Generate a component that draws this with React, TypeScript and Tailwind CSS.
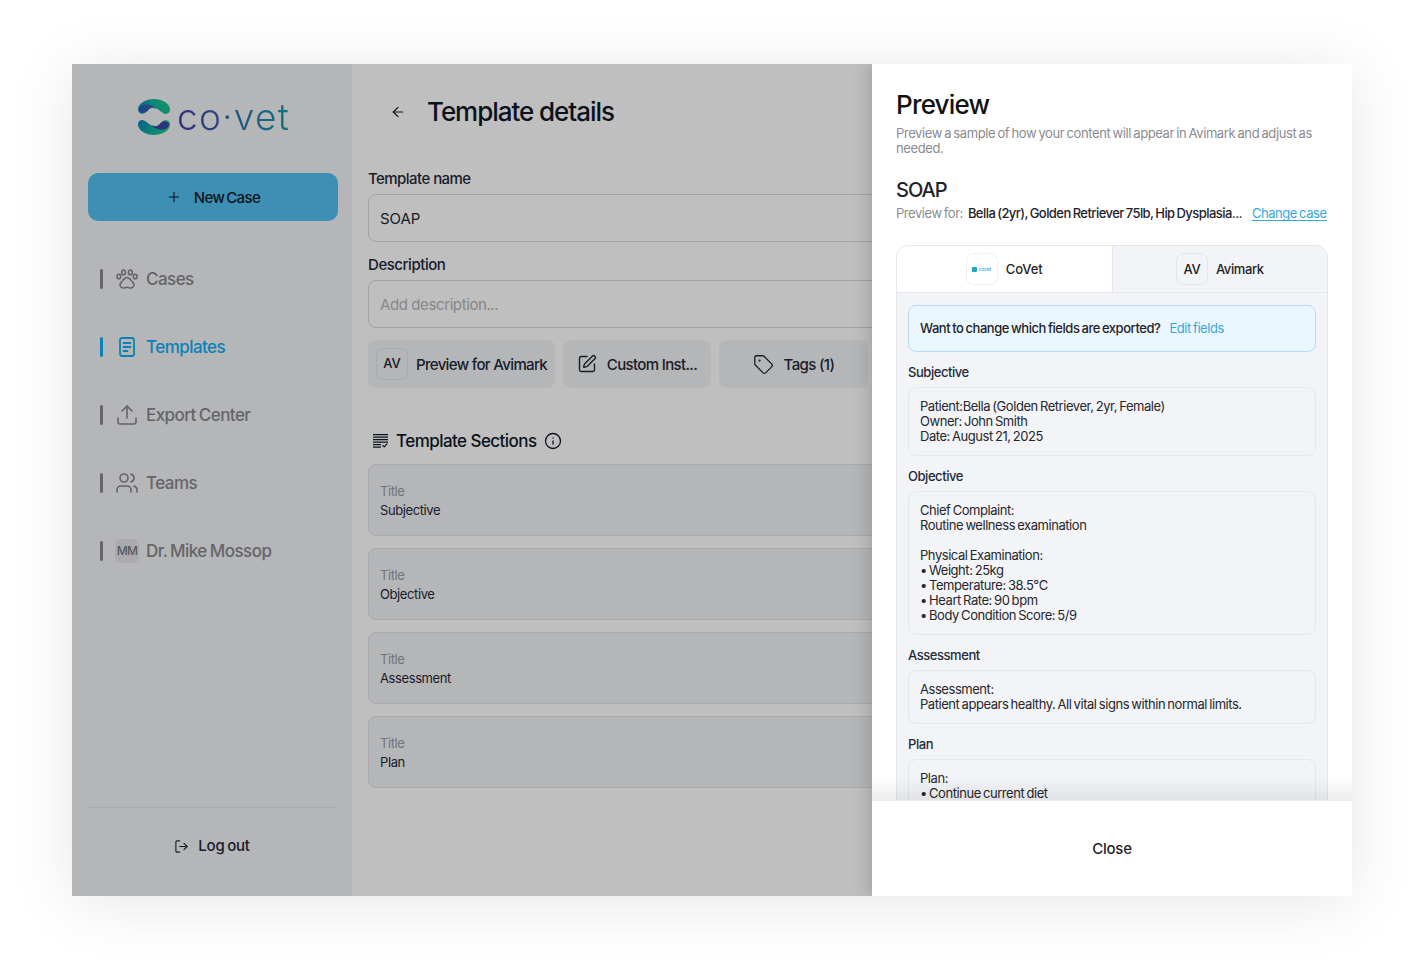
import React from 'react';
import { ArrowLeft, Info, LogOut, Plus, SquarePen, Tag, Upload, Users } from 'lucide-react';

const FONT = "font-['Inter',sans-serif]";

const LogoMark = () => (
  <svg width="32" height="36" viewBox="0 0 32 36" fill="none">
    <defs>
      <linearGradient id="lg-top" x1="2" y1="14" x2="30" y2="2" gradientUnits="userSpaceOnUse">
        <stop offset="0" stopColor="#0c86bd" />
        <stop offset="0.5" stopColor="#10b59f" />
        <stop offset="1" stopColor="#1fc48c" />
      </linearGradient>
      <linearGradient id="lg-bottom" x1="2" y1="22" x2="24" y2="36" gradientUnits="userSpaceOnUse">
        <stop offset="0" stopColor="#0c86bd" />
        <stop offset="0.6" stopColor="#10b09f" />
        <stop offset="1" stopColor="#1fc48c" />
      </linearGradient>
    </defs>
    <path d="M0 10.500C0 4.500 8 0 16 0s16 4.500 16 10.500c0 4-3.500 5.500-7 3.500l-6-4.200C16 8 14 8 11.500 10L8.500 12.800C5 16 0 15 0 10.500Z" fill="url(#lg-top)" />
    <path d="M6 5.800c4-1 9 .6 13 4l-3.500-.9c-2-.5-3.500.4-5 1.700l-2 2.200C6 14.300 2 14 1 11 .5 8.500 3 6.500 6 5.800Z" fill="#3b4fae" opacity="0.85" />
    <path d="M32 25.500C32 31.500 24 36 16 36S0 31.500 0 25.500c0-4 3.500-5.500 7-3.500l6 4.200c3 1.800 5 1.800 7.500-.2l3-2.800C27 20 32 21 32 25.500Z" fill="url(#lg-bottom)" />
    <path d="M26 30.200c-4 1-9-.6-13-4l3.500.9c2 .5 3.500-.4 5-1.700l2-2.200c2.500-1.500 6.500-1.200 7.500 1.800.5 2.500-2 4.500-5 5.200Z" fill="#3f36a6" opacity="0.9" />
  </svg>
);

const PawIcon = () => (
  <svg width="22" height="20" viewBox="0 0 22 20" fill="none" stroke="currentColor" strokeWidth="1.600" strokeLinejoin="round">
    <ellipse cx="2.800" cy="7.500" rx="1.800" ry="2.300" />
    <ellipse cx="7.600" cy="3.400" rx="1.900" ry="2.400" />
    <ellipse cx="14.400" cy="3.400" rx="1.900" ry="2.400" />
    <ellipse cx="19.200" cy="7.500" rx="1.800" ry="2.300" />
    <path d="M11 8.500c2.300 0 3.400 1.700 4.500 3.400.8 1.100 2.500 1.900 2.500 3.700 0 1.900-1.500 3.400-3.300 3.400-1.500 0-2.300-.7-3.700-.7s-2.200.7-3.700.7C5.500 19 4 17.500 4 15.600c0-1.800 1.700-2.600 2.500-3.700C7.600 10.200 8.700 8.500 11 8.500Z" />
  </svg>
);

const TemplateIcon = () => (
  <svg width="16" height="20" viewBox="0 0 16 20" fill="none" stroke="currentColor" strokeWidth="1.800" strokeLinecap="round">
    <rect x="1" y="1" width="14" height="18" rx="2" />
    <path d="M4.500 6h7M4.500 10h7M4.500 14h4" />
  </svg>
);

const SectionsIcon = () => (
  <svg width="15" height="14" viewBox="0 0 15 14" fill="none" stroke="currentColor" strokeWidth="1.200">
    <path d="M0 .6h15M0 3.100h15M0 5.600h15M0 8.100h15M0 10.600h8M0 13.100h8" />
    <path d="M9.500 11.200l1.700 1.700 3-3.200" />
  </svg>
);

const navItems = [
  { label: 'Cases', icon: <PawIcon /> },
  { label: 'Templates', active: true, icon: <TemplateIcon /> },
  { label: 'Export Center', icon: <Upload size={24} strokeWidth={1.6} /> },
  { label: 'Teams', icon: <Users size={24} strokeWidth={1.6} /> },
  {
    label: 'Dr. Mike Mossop',
    icon: (
      <span className="flex h-6 w-6 items-center justify-center rounded-md bg-[#e4e5e7] text-[12px] font-medium tracking-[-0.6px] text-[#77777b]">
        MM
      </span>
    ),
  },
];

const Sidebar = () => (
  <aside className="flex w-[280px] shrink-0 flex-col bg-[#f2f3f6] px-4">
    <div className="flex h-[109px] items-center justify-center pb-[3px]">
      <div className="ml-[4px] flex items-center gap-[7px]">
        <LogoMark />
        <span className="bg-gradient-to-r from-[#4338a8] via-[#2f6fb0] to-[#0f9aa8] bg-clip-text text-[37px] leading-[44px] font-light tracking-[1.3px] text-transparent">
          co·vet
        </span>
      </div>
    </div>
    <button className="flex h-12 w-[250px] items-center justify-center gap-[12px] rounded-[10px] bg-[#52bff1] text-[15px] font-medium text-[#111827]">
      <Plus size={16} strokeWidth={1.6} />
      <span className="pt-[2px] tracking-[-0.6px] [word-spacing:-1.5px]">New Case</span>
    </button>
    <nav className="mt-[24px] flex flex-col">
      {navItems.map((item) => (
        <div
          key={item.label}
          className={`flex h-[68px] items-center ${item.active ? 'text-[#0eaef5]' : 'text-[#87878c]'}`}
        >
          <span className={`ml-[12px] h-5 w-[3px] rounded-sm ${item.active ? 'bg-[#0eaef5]' : 'bg-[#88888c]'}`} />
          <span className="ml-[12px] flex w-6 justify-center">{item.icon}</span>
          <span className="ml-[7px] pt-[2px] text-[17px] font-medium tracking-[-0.55px] [word-spacing:-1px]">{item.label}</span>
        </div>
      ))}
    </nav>
    <div className="mt-auto flex h-[89px] items-center justify-center border-t border-[#e3e4e8] pb-[12px] text-[#1f2937]">
      <LogOut size={15} strokeWidth={1.8} />
      <span className="ml-[9px] text-[15px] font-medium tracking-[-0.25px] [word-spacing:-1px]">Log out</span>
    </div>
  </aside>
);

const ActionButton = ({ width, gap, icon, label }: { width: string; gap: string; icon: React.ReactNode; label: string }) => (
  <div className={`flex h-12 shrink-0 items-center justify-center rounded-lg bg-[#f2f3f6] text-[15px] font-medium tracking-[-0.65px] text-[#1f2937] ${width} ${gap}`}>
    {icon}
    <span className="pt-[2px]">{label}</span>
  </div>
);

const sectionTitles = ['Subjective', 'Objective', 'Assessment', 'Plan'];

const MainContent = () => (
  <main className="flex min-w-0 flex-1 flex-col bg-white pl-4">
    <div className="flex h-[95px] items-center pl-[22px] text-[#111827]">
      <ArrowLeft size={16} strokeWidth={1.8} />
      <h1 className="ml-[21px] text-[26px] leading-[38px] font-medium tracking-[-1.05px]">Template details</h1>
    </div>
    <label className="mt-[9px] pt-[1px] text-[15px] leading-5 font-medium tracking-[-0.55px] text-[#1f2937]">Template name</label>
    <div className="mt-[5px] flex h-12 w-[968px] items-center rounded-lg border border-[#d9dadd] px-[11px] pt-[2px] text-[15px] tracking-[-0.1px] text-[#1f2937]">SOAP</div>
    <label className="mt-[12px] pt-[1px] text-[15px] leading-5 font-medium tracking-[-0.45px] text-[#1f2937]">Description</label>
    <div className="mt-[5px] flex h-12 w-[968px] items-center rounded-lg border border-[#d9dadd] px-[11px] pt-[2px] text-[15px] tracking-[-0.4px] text-[#b4b5b9]">Add description...</div>
    <div className="mt-3 flex gap-2">
      <ActionButton
        width="w-[187px]"
        gap="gap-2"
        label="Preview for Avimark"
        icon={
          <span className="flex h-8 w-8 items-center justify-center rounded-lg border border-[#e2e3e6] text-[13px] font-medium tracking-normal">AV</span>
        }
      />
      <ActionButton width="w-[148px]" gap="gap-[10px]" label="Custom Inst..." icon={<SquarePen size={20} strokeWidth={1.7} />} />
      <ActionButton width="w-[149px]" gap="gap-[10px]" label="Tags (1)" icon={<Tag size={21} strokeWidth={1.5} />} />
    </div>
    <div className="mt-[41px] flex h-6 items-center pl-[5px] text-[#111827]">
      <SectionsIcon />
      <span className="ml-[8px] pt-[1px] text-[17px] font-medium tracking-[-0.55px]">Template Sections</span>
      <Info size={18} strokeWidth={1.7} className="ml-[7px]" />
    </div>
    <div className="mt-[11px] flex flex-col gap-3">
      {sectionTitles.map((title) => (
        <div key={title} className="flex h-[72px] w-[968px] flex-col justify-center rounded-lg border border-[#e2e3e7] bg-[#f2f3f6] px-[11px] pt-[2px] text-[13px] leading-[19px] tracking-[-0.4px]">
          <span className="text-[#9a9ba0]">Title</span>
          <span className="text-[#1f2937]">{title}</span>
        </div>
      ))}
    </div>
  </main>
);

const PreviewSection = ({ title, children }: { title: string; children: React.ReactNode }) => (
  <div>
    <div className="pt-3 pb-[7px] text-[13px] leading-[16px] font-medium tracking-[-0.45px] text-[#1f2937]">{title}</div>
    <div className="rounded-lg border border-[#e5e7eb] p-[11px] text-[13px] leading-[15px] tracking-[-0.45px] text-[#27272a] [word-spacing:-1px]">
      {children}
    </div>
  </div>
);

const PreviewPanel = () => (
  <section className="absolute top-0 right-0 bottom-0 flex w-[480px] flex-col bg-white shadow-[-4px_0_16px_rgba(0,0,0,0.15)]">
    <div className="relative flex-1 overflow-hidden px-6 pt-[24px]">
      <h2 className="text-[26px] leading-[34px] font-medium tracking-[-0.8px] text-[#111111]">Preview</h2>
      <p className="mt-[4px] text-[13px] leading-[15px] tracking-[-0.4px] text-[#8a8b90] [word-spacing:-1px]">
        Preview a sample of how your content will appear in Avimark and adjust as needed.
      </p>
      <div className="mt-[21px] text-[20px] leading-[26px] font-medium tracking-[-1px] text-[#1f2328]">SOAP</div>
      <div className="mt-[1px] flex items-center text-[13px] leading-[18px] tracking-[-0.45px] whitespace-nowrap [word-spacing:-1px]">
        <span className="text-[#8a8b90]">Preview for:</span>
        <span className="ml-[5px] w-[275px] font-medium tracking-[-0.55px] text-[#1f2328]">Bella (2yr), Golden Retriever 75lb, Hip Dysplasia...</span>
        <span className="ml-[9px] border-b border-[#35a8dc] leading-[14px] text-[#35a8dc]">Change case</span>
      </div>
      <div className="mt-[23px] w-[432px] rounded-t-xl border border-[#e5e7eb] bg-[#f2f4f8]">
        <div className="flex h-[47px] border-b border-[#e5e7eb]">
          <div className="flex flex-1 items-center justify-center gap-2 rounded-tl-xl border-r border-[#e5e7eb] bg-white text-[13px] font-medium tracking-[-0.1px] text-[#1f2328]">
            <span className="flex h-8 w-8 items-center justify-center rounded-lg border border-[#eef0f3]">
              <span className="flex items-center gap-[1px] text-[5px] leading-none text-[#35a8dc]">
                <span className="h-[5px] w-[5px] rounded-[1px] bg-[#1aa7c9]" />
                covet
              </span>
            </span>
            <span className="pt-[1px]">CoVet</span>
          </div>
          <div className="flex flex-1 items-center justify-center gap-2 text-[13px] font-medium tracking-[-0.4px] text-[#1f2328]">
            <span className="flex h-8 w-8 items-center justify-center rounded-lg border border-[#e3e5e9] pt-[1px] text-[13px]">AV</span>
            <span className="pt-[1px]">Avimark</span>
          </div>
        </div>
        <div className="px-[11px] pt-3">
          <div className="flex h-[47px] items-center rounded-lg border border-[#b7dcf2] bg-[#ebf7fe] px-[11px] pt-[1px] text-[13px] tracking-[-0.45px] [word-spacing:-1px]">
            <span className="font-medium text-[#1f2328]">Want to change which fields are exported?</span>
            <span className="ml-[9px] text-[#35a8dc]">Edit fields</span>
          </div>
          <PreviewSection title="Subjective">
            <div>Patient:Bella (Golden Retriever, 2yr, Female)</div>
            <div>Owner: John Smith</div>
            <div>Date: August 21, 2025</div>
          </PreviewSection>
          <PreviewSection title="Objective">
            <div>Chief Complaint:</div>
            <div>Routine wellness examination</div>
            <div className="mt-[15px]">Physical Examination:</div>
            <div>• Weight: 25kg</div>
            <div>• Temperature: 38.5°C</div>
            <div>• Heart Rate: 90 bpm</div>
            <div>• Body Condition Score: 5/9</div>
          </PreviewSection>
          <PreviewSection title="Assessment">
            <div>Assessment:</div>
            <div>Patient appears healthy. All vital signs within normal limits.</div>
          </PreviewSection>
          <PreviewSection title="Plan">
            <div>Plan:</div>
            <div>• Continue current diet</div>
          </PreviewSection>
        </div>
      </div>
      <div className="absolute right-0 bottom-0 left-0 h-[24px] bg-gradient-to-b from-transparent to-[#00000012]" />
    </div>
    <div className="flex h-[96px] shrink-0 items-center justify-center border-t border-[#e8e9ec] bg-white pt-[2px] text-[15px] font-medium tracking-[-0.2px] text-[#1f2328]">
      Close
    </div>
  </section>
);

const App: React.FC = () => {
  return (
    <div className={`h-[968px] w-[1416px] overflow-hidden bg-white pt-16 pl-[72px] ${FONT}`}>
      <div className="relative flex h-[832px] w-[1280px] overflow-hidden shadow-[0_6px_60px_rgba(0,0,0,0.1)]">
        <Sidebar />
        <MainContent />
        {/* dim layer behind the drawer */}
        <div className="absolute inset-0 bg-black/25" />
        <PreviewPanel />
      </div>
    </div>
  );
};

export default App;
